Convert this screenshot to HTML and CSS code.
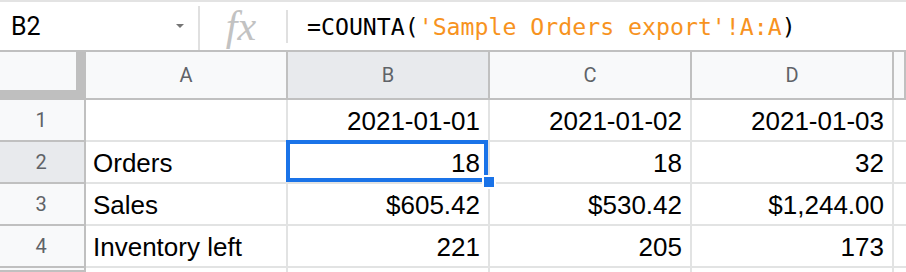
FILE: index.html
```html
<!DOCTYPE html>
<html lang="en">
<head>
  <meta charset="UTF-8">
  <title>Sheet - Orders summary</title>
  <link rel="stylesheet" href="styles.css">
</head>
<body>
  <div class="formula-bar">
    <div class="name-box">
      <span class="ref">B2</span>
      <span class="caret"></span>
    </div>
    <div class="divider tall"></div>
    <div class="fx">fx</div>
    <div class="divider"></div>
    <div class="formula">=COUNTA(<span class="str">'Sample Orders export'!A:A</span>)</div>
  </div>

  <div class="sheet">
    <div class="corner"></div>
    <div class="col-head">A</div>
    <div class="col-head active">B</div>
    <div class="col-head">C</div>
    <div class="col-head">D</div>
    <div class="col-head"></div>

    <div class="row-head">1</div>
    <div class="cell"></div>
    <div class="cell num">2021-01-01</div>
    <div class="cell num">2021-01-02</div>
    <div class="cell num">2021-01-03</div>
    <div class="cell"></div>

    <div class="row-head active">2</div>
    <div class="cell">Orders</div>
    <div class="cell num selected">18<span class="handle"></span></div>
    <div class="cell num">18</div>
    <div class="cell num">32</div>
    <div class="cell"></div>

    <div class="row-head">3</div>
    <div class="cell">Sales</div>
    <div class="cell num">$605.42</div>
    <div class="cell num">$530.42</div>
    <div class="cell num">$1,244.00</div>
    <div class="cell"></div>

    <div class="row-head">4</div>
    <div class="cell">Inventory left</div>
    <div class="cell num">221</div>
    <div class="cell num">205</div>
    <div class="cell num">173</div>
    <div class="cell"></div>

    <div class="row-head"></div>
    <div class="cell"></div>
    <div class="cell"></div>
    <div class="cell"></div>
    <div class="cell"></div>
    <div class="cell"></div>
  </div>
</body>
</html>
```

FILE: styles.css
```css
body {
  margin: 0;
  background: #fff;
  overflow: hidden;
  font-family: "Liberation Sans", Arial, sans-serif;
}

/* formula bar */
.formula-bar {
  display: flex;
  align-items: center;
  height: 48px;
  border-top: 2px solid #e3e3e3;
  box-sizing: content-box;
}
.name-box {
  display: flex;
  align-items: center;
  justify-content: space-between;
  width: 198px;
  padding: 0 14px 0 11px;
  box-sizing: border-box;
}
.ref {
  font-family: Roboto, "Liberation Sans", sans-serif;
  font-size: 25px;
  color: #000;
}
.caret {
  width: 0;
  height: 0;
  border-left: 4px solid transparent;
  border-right: 4px solid transparent;
  border-top: 4px solid #757575;
}
.divider {
  width: 2px;
  height: 33px;
  background: #e0e0e0;
}
.divider.tall {
  height: 44px;
  align-self: flex-end;
}
.fx {
  width: 86px;
  text-align: center;
  font-family: "Liberation Serif", serif;
  font-style: italic;
  font-size: 42px;
  color: #c2c2c2;
  line-height: 44px;
  padding-right: 4px;
  box-sizing: border-box;
}
.formula {
  padding-left: 19px;
  font-family: "DejaVu Sans Mono", "Liberation Mono", monospace;
  font-size: 23.2px;
  color: #000;
  white-space: nowrap;
}
.formula .str {
  color: #f7931e;
}

/* grid */
.sheet {
  display: grid;
  grid-template-columns: 86px 202px 202px 202px 202px 12px;
  grid-template-rows: 48px repeat(4, 42px) 4px;
  border-top: 2px solid #c0c0c0;
}
.sheet > div {
  box-sizing: border-box;
  border-right: 2px solid #e2e3e3;
  border-bottom: 2px solid #e2e3e3;
}
.corner {
  background: #f8f9fa;
  border-right: 10px solid #bfbfbf !important;
  border-bottom: 10px solid #bfbfbf !important;
}
.col-head, .row-head {
  display: flex;
  align-items: center;
  justify-content: center;
  background: #f8f9fa;
  font-family: Roboto, "Liberation Sans", sans-serif;
  font-size: 20px;
  color: #5f6368;
  border-color: #c0c0c0 !important;
}
.row-head {
  padding-right: 2px;
}
.col-head.active, .row-head.active {
  background: #e8eaed;
}
.cell {
  display: flex;
  align-items: flex-end;
  padding: 0 8px 4px 7px;
  font-size: 26px;
  line-height: 30px;
  color: #000;
  white-space: nowrap;
}
.cell.num {
  justify-content: flex-end;
}

/* selection */
.selected {
  position: relative;
}
.selected::after {
  content: "";
  position: absolute;
  top: -2px;
  left: -2px;
  right: 0;
  bottom: 0;
  border: 4px solid #1a73e8;
}
.handle {
  position: absolute;
  left: 194px;
  top: 33px;
  width: 10px;
  height: 10px;
  background: #1a73e8;
  border: 2px solid #fff;
  z-index: 1;
}
```
